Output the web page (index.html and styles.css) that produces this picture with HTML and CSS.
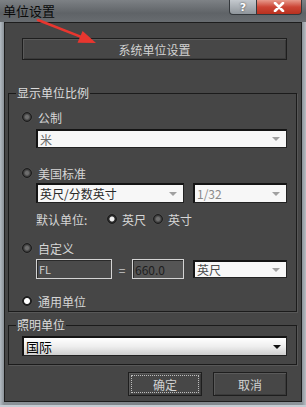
FILE: index.html
```html
<!DOCTYPE html>
<html lang="zh">
<head>
  <meta charset="UTF-8">
  <title>单位设置</title>
  <link rel="stylesheet" href="styles.css">
</head>
<body>
  <div class="window">
    <!-- Barra de título -->
    <div class="titlebar">
      <span class="title">单位设置</span>
      <div class="caption-btns">
        <span class="cap cap-help">?</span>
        <span class="cap cap-close">
          <svg width="12" height="10" viewBox="0 0 12 10"><path d="M2 1 L10 9 M10 1 L2 9" stroke="#fff" stroke-width="2.6" stroke-linecap="round"/></svg>
        </span>
      </div>
    </div>

    <!-- Contenido -->
    <div class="client">
      <div class="btn btn-wide">系统单位设置</div>

      <fieldset class="group group-display">
        <legend>显示单位比例</legend>

        <div class="radio-row row-metric"><span class="radio"></span>公制</div>
        <div class="combo combo-dim combo-metric">米<span class="arrow"></span></div>

        <div class="radio-row row-us"><span class="radio"></span>美国标准</div>
        <div class="combo-line line-us">
          <div class="combo combo-us">英尺/分数英寸<span class="arrow"></span></div>
          <div class="combo combo-dim combo-frac">1/32<span class="arrow"></span></div>
        </div>
        <div class="default-row">
          <span class="default-label">默认单位:</span>
          <span class="radio radio-on"></span><span class="opt">英尺</span>
          <span class="radio"></span><span class="opt">英寸</span>
        </div>

        <div class="radio-row row-custom"><span class="radio"></span>自定义</div>
        <div class="combo-line line-custom">
          <div class="field field-name">FL</div>
          <span class="equals">=</span>
          <div class="field field-value">660.0</div>
          <div class="combo combo-dim combo-unit">英尺<span class="arrow"></span></div>
        </div>

        <div class="radio-row row-generic"><span class="radio radio-on radio-bright"></span>通用单位</div>
      </fieldset>

      <fieldset class="group group-light">
        <legend>照明单位</legend>
        <div class="combo combo-active combo-light">国际<span class="arrow"></span></div>
      </fieldset>

      <div class="actions">
        <div class="btn btn-dialog btn-focus"><span>确定</span></div>
        <div class="btn btn-dialog">取消</div>
      </div>
    </div>

    <!-- Flecha roja de anotación -->
    <svg class="annot" width="306" height="60" viewBox="0 0 306 60">
      <path d="M38 20 L83 37.6" stroke="#e8362f" stroke-width="2.6" stroke-linecap="round"/>
      <polygon points="96,43 77.5,42.8 82.6,31" fill="#e8362f"/>
    </svg>
  </div>
</body>
</html>
```

FILE: styles.css
```css
* {
  box-sizing: border-box;
}

body {
  margin: 0;
  font-family: "Noto Sans CJK SC", "Noto Sans", sans-serif;
  font-size: 12px;
  color: #d6d6d6;
  background: #6c7176;
}

/* Ventana */
.window {
  position: relative;
  width: 306px;
  height: 407px;
  background: linear-gradient(to right, #b4bcc3, #8b9298 4px, #7c8287 50%, #8d949a 302px, #b8bec4);
  padding-bottom: 5px;
  border-bottom: 2px solid #c4ccd3;
}

.titlebar {
  height: 22px;
  display: flex;
  justify-content: space-between;
  align-items: flex-start;
  background: linear-gradient(#7d8185, #5f6367 60%, #686c70);
}

.title {
  margin: 2px 0 0 3px;
  font-size: 13px;
  line-height: 18px;
  color: #0a0a0a;
}

.caption-btns {
  display: flex;
  margin-right: 4px;
}

.cap {
  height: 15px;
  display: flex;
  justify-content: center;
  align-items: center;
  border: 1px solid #34383c;
  border-top: none;
}

.cap-help {
  width: 28px;
  border-radius: 0 0 0 4px;
  background: linear-gradient(#c4c9ce, #8f959b);
  color: #fff;
  font-family: "DejaVu Sans", sans-serif;
  font-weight: bold;
  font-size: 11px;
  text-shadow: 0 0 2px #333;
}

.cap-close {
  width: 45px;
  border-left: none;
  border-radius: 0 0 4px 0;
  background: linear-gradient(#e79a8c, #cc4535 50%, #b8311f);
}

.client {
  height: 380px;
  margin: 0 4px;
  background: #464646;
  border: 1px solid #1d1d1d;
  display: flex;
  flex-direction: column;
}

/* Botones */
.btn {
  display: flex;
  justify-content: center;
  align-items: center;
  background: #474747;
  border: 1px solid #1e1e1e;
  box-shadow: inset 1px 1px 0 #5a5a5a, inset -1px -1px 0 #3a3a3a;
  color: #d2d2d2;
  font-size: 12px;
}

.btn-wide {
  margin: 15px 0 0 17px;
  width: 265px;
  height: 22px;
}

.actions {
  display: flex;
  justify-content: flex-end;
  gap: 11px;
  margin: 7px 14px 0 0;
}

.btn-dialog {
  width: 74px;
  height: 24px;
}

.btn-focus span {
  display: flex;
  justify-content: center;
  align-items: center;
  width: 68px;
  height: 18px;
  border: 1px dotted #bdbdbd;
}

/* Grupos */
.group {
  margin: 0 0 0 3px;
  width: 289px;
  padding: 0;
  border: 1px solid #1b1b1b;
  box-shadow: 1px 1px 0 #575757;
  min-width: 0;
}

.group legend {
  margin-left: 7px;
  padding: 0 1px;
  font-size: 12px;
  line-height: 14px;
  color: #dcdcdc;
}

.group-display {
  margin-top: 26px;
  padding-bottom: 3px;
}

.group-light {
  margin-top: 6px;
  padding-bottom: 8px;
}

.radio-row {
  display: flex;
  align-items: center;
  height: 14px;
  padding-left: 13px;
  gap: 6px;
}

.row-metric { margin-top: 10px; }
.row-us { margin-top: 18px; }
.row-custom { margin-top: 15px; }
.row-generic { margin-top: 15px; }

.radio {
  width: 10px;
  height: 10px;
  border-radius: 50%;
  flex-shrink: 0;
  border: 1px solid #1c1c1c;
  background: radial-gradient(circle at 50% 50%, #6e6e6e 0 1.5px, #3a3a3a 3.5px, #262626 5px);
  box-shadow: 0 0 1px #6a6a6a;
}

.radio-on {
  background: radial-gradient(circle at 50% 50%, #efefef 0 2px, #2a2a2a 3px, #222 5px);
}

.radio-bright {
  background: radial-gradient(circle at 50% 50%, #ffffff 0 2.5px, #222 3.5px, #2a2a2a 5px);
}

/* Listas desplegables */
.combo {
  position: relative;
  display: flex;
  align-items: center;
  padding-left: 2px;
  background: #f7f7f7;
  border-top: 2px solid #141414;
  border-left: 2px solid #141414;
  border-right: 1px solid #222;
  border-bottom: 1px solid #222;
  color: #2a2a2a;
  font-size: 12px;
}

.combo .arrow {
  position: absolute;
  right: 6px;
  top: 50%;
  margin-top: -2px;
  border-left: 4px solid transparent;
  border-right: 4px solid transparent;
  border-top: 4px solid #a0a0a0;
}

.combo-dim {
  color: #6a6a6a;
}

.combo-metric {
  margin: 5px 0 0 27px;
  width: 251px;
  height: 19px;
}

.combo-line {
  display: flex;
  align-items: center;
  margin-left: 27px;
}

.line-us {
  margin-top: 3px;
  gap: 9px;
}

.combo-us {
  width: 148px;
  height: 20px;
}

.combo-frac {
  width: 94px;
  height: 20px;
  color: #8a8a8a;
}

.default-row {
  display: flex;
  align-items: center;
  height: 14px;
  margin: 9px 0 0 27px;
}

.default-label {
  width: 71px;
}

.opt {
  margin: 0 7px 0 5px;
}

.line-custom {
  margin-top: 4px;
}

.field {
  height: 20px;
  display: flex;
  align-items: center;
  padding-left: 2px;
  border: 1px solid #d4d4d4;
  box-shadow: inset 1px 1px 0 #2a2a2a;
  font-size: 11px;
}

.field-name {
  width: 76px;
  background: #4a4a4a;
  color: #d0d0d0;
}

.equals {
  width: 20px;
  text-align: center;
  color: #c8c8c8;
}

.field-value {
  width: 52px;
  background: #555;
  color: #1e1e1e;
  font-size: 12px;
}

.combo-unit {
  margin-left: 9px;
  width: 94px;
  height: 18px;
  color: #4a4a4a;
}

.combo-light {
  margin: 4px 0 0 13px;
  width: 265px;
  height: 20px;
  background: linear-gradient(#ffffff, #eeeeee 50%, #cfcfcf);
  color: #000;
  font-size: 13px;
}

.combo-active .arrow {
  border-top-color: #111;
  right: 5px;
}

/* Anotación */
.annot {
  position: absolute;
  top: 0;
  left: 0;
  pointer-events: none;
}
```
